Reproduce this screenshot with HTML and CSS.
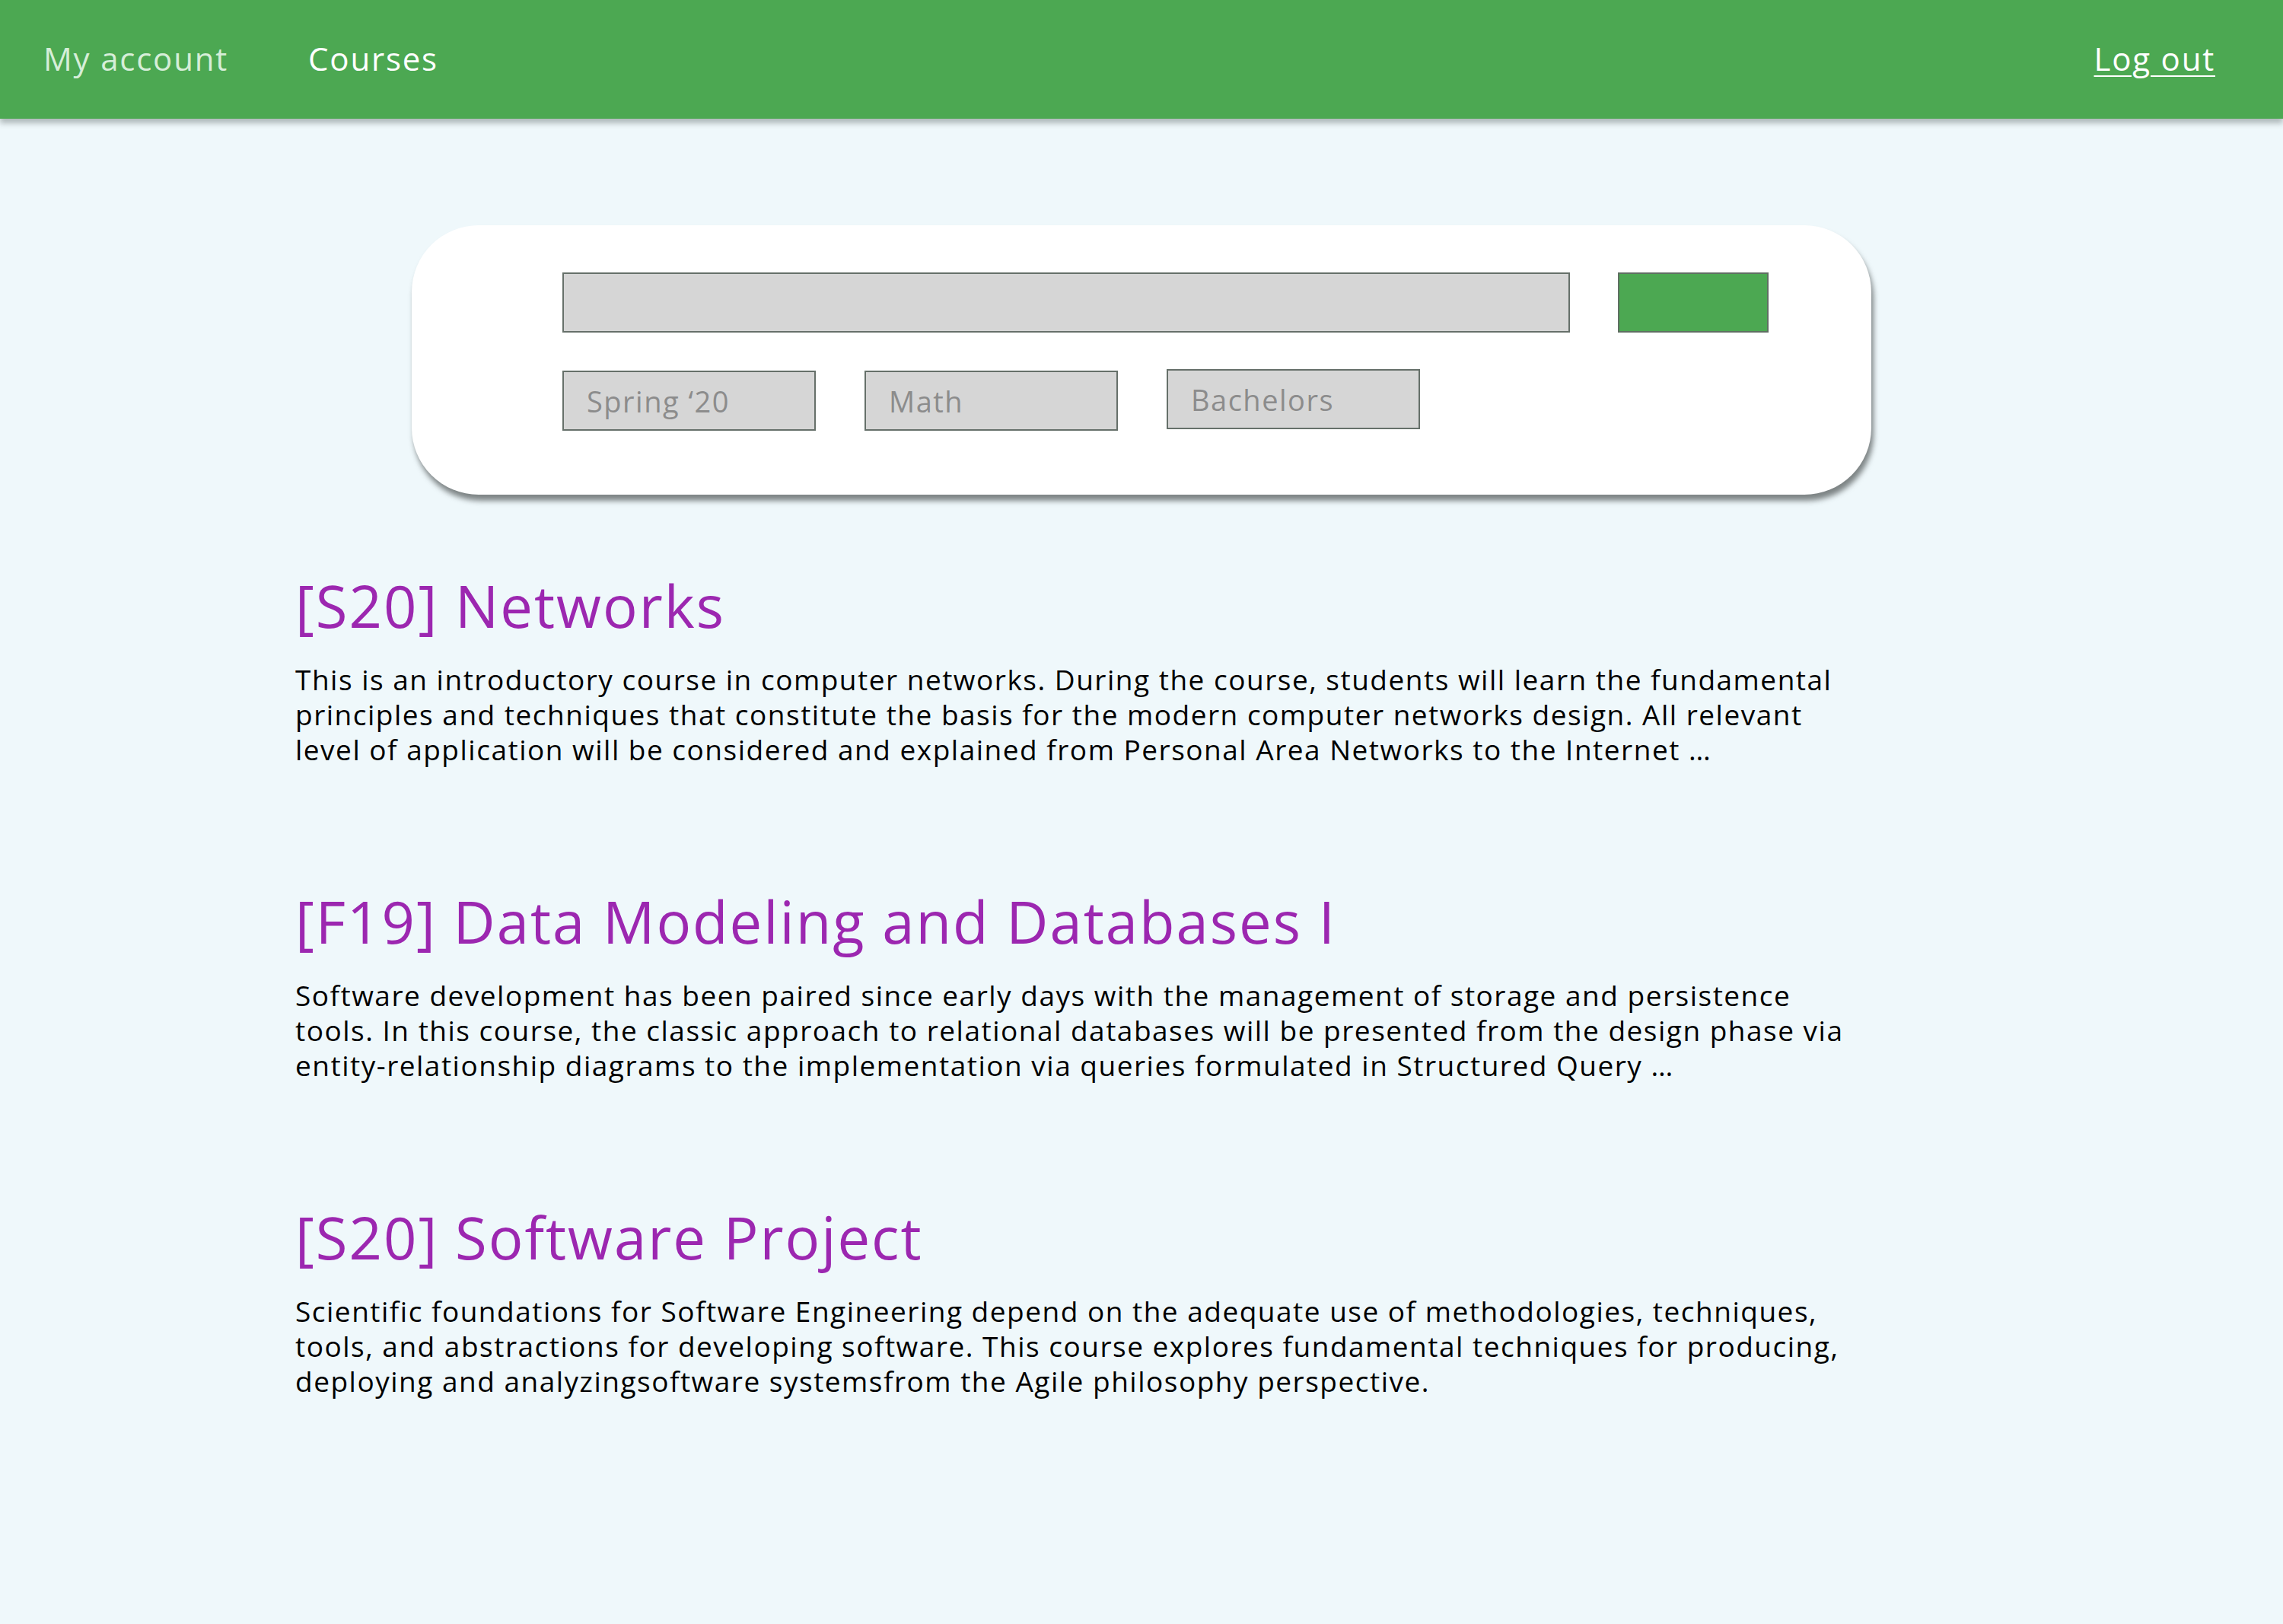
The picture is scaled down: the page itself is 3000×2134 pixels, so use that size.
FILE: index.html
```html
<!DOCTYPE html>
<html lang="en">
<head>
<meta charset="utf-8">
<title>Courses</title>
<link rel="stylesheet" href="styles.css">
</head>
<body>
<header class="topbar">
  <nav class="topbar-links">
    <a class="topbar-link topbar-link--muted" href="#">My account</a>
    <a class="topbar-link" href="#">Courses</a>
  </nav>
  <a class="logout" href="#">Log out</a>
</header>

<main class="page">
  <section class="search-card">
    <div class="search-row">
      <div class="search-input"></div>
      <div class="search-button"></div>
    </div>
    <div class="filter-row">
      <div class="filter">Spring ‘20</div>
      <div class="filter">Math</div>
      <div class="filter filter--raised">Bachelors</div>
    </div>
  </section>

  <section class="course-list">
    <article class="course">
      <h2 class="course-title">[S20] Networks</h2>
      <p class="course-desc">This is an introductory course in computer networks. During the course, students will learn the fundamental principles and techniques that constitute the basis for the modern computer networks design. All relevant level of application will be considered and explained from Personal Area Networks to the Internet …</p>
    </article>
    <article class="course">
      <h2 class="course-title">[F19] Data Modeling and Databases I</h2>
      <p class="course-desc">Software development has been paired since early days with the management of storage and persistence tools. In this course, the classic approach to relational databases will be presented from the design phase via entity-relationship diagrams to the implementation via queries formulated in Structured Query …</p>
    </article>
    <article class="course">
      <h2 class="course-title">[S20] Software Project</h2>
      <p class="course-desc">Scientific foundations for Software Engineering depend on the adequate use of methodologies, techniques, tools, and abstractions for developing software. This course explores fundamental techniques for producing, deploying and analyzingsoftware systemsfrom the Agile philosophy perspective.</p>
    </article>
  </section>
</main>
</body>
</html>
```

FILE: styles.css
```css
* { box-sizing: border-box; }

html, body {
  margin: 0;
  padding: 0;
}

body {
  background: #eff8fb;
  font-family: "Open Sans", "Noto Sans", "Liberation Sans", sans-serif;
  color: #000;
  min-height: 2134px;
}

/* ---------- top bar ---------- */
.topbar {
  height: 156px;
  background: #4ca852;
  display: flex;
  align-items: center;
  justify-content: space-between;
  padding: 0 89px 4px 57px;
  box-shadow: 0 6px 7px rgba(60, 70, 70, 0.35);
  position: relative;
  z-index: 1;
}

.topbar-links {
  display: flex;
  gap: 105px;
}

.topbar-link,
.logout {
  font-size: 42px;
  color: #ffffff;
  text-decoration: none;
  letter-spacing: 1.8px;
}

.topbar-link--muted {
  color: #d6eed8;
}

.logout {
  text-decoration: underline;
  text-decoration-thickness: 2px;
  text-underline-offset: 6px;
}

/* ---------- search card ---------- */
.page {
  padding-top: 140px;
}

.search-card {
  width: 1918px;
  margin: 0 auto;
  background: #ffffff;
  border-radius: 88px;
  padding: 62px 135px 84px 198px;
  box-shadow: 3px 8px 7px rgba(50, 55, 55, 0.6);
}

.search-row {
  display: flex;
  gap: 63px;
}

.search-input {
  flex: 1;
  height: 79px;
  background: #d6d6d6;
  border: 2px solid #66706a;
}

.search-button {
  width: 198px;
  height: 79px;
  background: #4ca852;
  border: 2px solid #5f6f62;
}

.filter-row {
  display: flex;
  gap: 64px;
  margin-top: 50px;
  align-items: flex-start;
}

.filter {
  width: 333px;
  height: 79px;
  background: #d6d6d6;
  border: 2px solid #66706a;
  display: flex;
  align-items: center;
  padding-left: 30px;
  font-size: 38px;
  color: #8c8c8c;
  letter-spacing: 1.5px;
}

.filter--raised {
  margin-top: -2px;
}

/* ---------- course list ---------- */
.course-list {
  width: 2435px;
  padding-left: 388px;
  padding-top: 100px;
}

.course + .course {
  margin-top: 157px;
}

.course-title {
  margin: 0;
  font-size: 76px;
  line-height: 92px;
  font-weight: 400;
  color: #9c27b0;
  letter-spacing: 2px;
}

.course-desc {
  margin: 28px 0 0;
  font-size: 37px;
  line-height: 46px;
  letter-spacing: 1.5px;
}
```
